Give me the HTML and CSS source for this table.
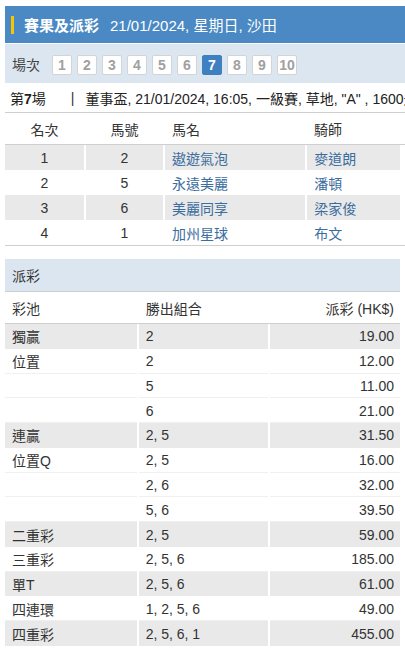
FILE: index.html
```html
<!DOCTYPE html>
<html lang="zh-Hant">
<head>
<meta charset="utf-8">
<title>賽果及派彩</title>
<link rel="stylesheet" href="styles.css">
</head>
<body>
<div class="page">
  <div class="titlebar">
    <span class="flag"></span>
    <span class="title">賽果及派彩</span>
    <span class="date">21/01/2024, 星期日, 沙田</span>
  </div>

  <div class="races">
    <span class="races-label">場次</span>
    <div class="race-list">
      <span class="race">1</span>
      <span class="race">2</span>
      <span class="race">3</span>
      <span class="race">4</span>
      <span class="race">5</span>
      <span class="race">6</span>
      <span class="race active">7</span>
      <span class="race">8</span>
      <span class="race">9</span>
      <span class="race">10</span>
    </div>
  </div>

  <div class="raceinfo">
    <span class="raceno">第<b>7</b>場</span>
    <span class="sep">|</span>
    <span class="raceinfo-text">董事盃, 21/01/2024, 16:05, 一級賽, 草地, "A" , 1600米, 好地</span>
  </div>

  <div class="results">
    <div class="rrow rhead">
      <div class="c center">名次</div>
      <div class="c center">馬號</div>
      <div class="c">馬名</div>
      <div class="c">騎師</div>
    </div>
    <div class="rrow alt">
      <div class="c center">1</div>
      <div class="c center">2</div>
      <div class="c link">遨遊氣泡</div>
      <div class="c link">麥道朗</div>
    </div>
    <div class="rrow">
      <div class="c center">2</div>
      <div class="c center">5</div>
      <div class="c link">永遠美麗</div>
      <div class="c link">潘頓</div>
    </div>
    <div class="rrow alt">
      <div class="c center">3</div>
      <div class="c center">6</div>
      <div class="c link">美麗同享</div>
      <div class="c link">梁家俊</div>
    </div>
    <div class="rrow">
      <div class="c center">4</div>
      <div class="c center">1</div>
      <div class="c link">加州星球</div>
      <div class="c link">布文</div>
    </div>
  </div>

  <div class="payout">
    <div class="payout-title">派彩</div>
    <div class="prow phead">
      <div class="c">彩池</div>
      <div class="c">勝出組合</div>
      <div class="c right">派彩 (HK$)</div>
    </div>
    <div class="prow alt"><div class="c">獨贏</div><div class="c">2</div><div class="c right">19.00</div></div>
    <div class="prow"><div class="c">位置</div><div class="c">2</div><div class="c right">12.00</div></div>
    <div class="prow"><div class="c"></div><div class="c">5</div><div class="c right">11.00</div></div>
    <div class="prow"><div class="c"></div><div class="c">6</div><div class="c right">21.00</div></div>
    <div class="prow alt"><div class="c">連贏</div><div class="c">2, 5</div><div class="c right">31.50</div></div>
    <div class="prow"><div class="c">位置Q</div><div class="c">2, 5</div><div class="c right">16.00</div></div>
    <div class="prow"><div class="c"></div><div class="c">2, 6</div><div class="c right">32.00</div></div>
    <div class="prow"><div class="c"></div><div class="c">5, 6</div><div class="c right">39.50</div></div>
    <div class="prow alt"><div class="c">二重彩</div><div class="c">2, 5</div><div class="c right">59.00</div></div>
    <div class="prow"><div class="c">三重彩</div><div class="c">2, 5, 6</div><div class="c right">185.00</div></div>
    <div class="prow alt"><div class="c">單T</div><div class="c">2, 5, 6</div><div class="c right">61.00</div></div>
    <div class="prow"><div class="c">四連環</div><div class="c">1, 2, 5, 6</div><div class="c right">49.00</div></div>
    <div class="prow alt"><div class="c">四重彩</div><div class="c">2, 5, 6, 1</div><div class="c right">455.00</div></div>
  </div>
</div>
</body>
</html>
```

FILE: styles.css
```css
html, body {
  margin: 0;
  padding: 0;
  overflow: hidden;
}
body {
  background: #fff;
  font-family: "Liberation Sans", Arial, "Noto Sans CJK TC", sans-serif;
  font-size: 14px;
  color: #333;
}
.page {
  padding: 6px 0 0 5px;
  width: 400px;
}

/* title bar */
.titlebar {
  height: 37px;
  background: #4a89c3;
  display: flex;
  align-items: center;
  padding-left: 6px;
  color: #fff;
  font-size: 15px;
}
.flag {
  width: 3px;
  height: 18px;
  background: #f7c600;
  margin-right: 10px;
}
.title {
  font-weight: bold;
}
.date {
  margin-left: 11px;
}

/* race selector */
.races {
  margin-top: 1px;
  height: 39px;
  background: #dce6f1;
  display: flex;
  align-items: center;
  padding-left: 7px;
}
.races-label {
  color: #444;
  margin-right: 12px;
}
.race-list {
  display: flex;
  gap: 5px;
  margin-top: 3px;
}
.race {
  box-sizing: border-box;
  width: 20px;
  height: 20px;
  background: #fff;
  border: 1px solid #d4d4d4;
  border-radius: 2px;
  display: flex;
  align-items: center;
  justify-content: center;
  font-weight: bold;
  font-size: 14px;
  color: #a0a0a0;
}
.race.active {
  background: #3f80c0;
  border-color: #3f80c0;
  color: #fff;
}

/* race info line */
.raceinfo {
  height: 29px;
  display: flex;
  align-items: center;
  padding-left: 5px;
  white-space: nowrap;
  overflow: hidden;
  color: #222;
}
.sep {
  margin-left: 25px;
  margin-right: 11px;
  color: #333;
}

/* results table */
.results {
  border-top: 1px solid #cfcfcf;
  border-bottom: 1px solid #cfcfcf;
}
.rrow {
  width: 395px;
  display: grid;
  grid-template-columns: 20% 20% 36% 24%;
  height: 25px;
  align-items: stretch;
}
.rrow.rhead {
  height: 31px;
  border-bottom: 1px solid #cfcfcf;
  width: 400px;
  grid-template-columns: 79px 79px 142px 100px;
}
.c {
  display: flex;
  align-items: center;
  padding: 0 7px;
  border-left: 2px solid #fff;
  white-space: nowrap;
}
.c:first-child {
  border-left: none;
}
.center {
  justify-content: center;
}
.right {
  justify-content: flex-end;
}
.link {
  color: #3b6d9e;
}
.alt {
  background: #e9e9e9;
}

/* payout */
.payout {
  margin-top: 13px;
  width: 395px;
}
.payout-title {
  height: 32px;
  background: #dce6f1;
  display: flex;
  align-items: center;
  padding-left: 7px;
  border-bottom: 1px solid #cfcfcf;
}
.prow {
  display: grid;
  grid-template-columns: 1fr 1fr 1fr;
  height: 24.77px;
  box-shadow: inset 0 -1px 0 #f0f0f0;
}
.prow.alt {
  box-shadow: none;
}
.prow.phead {
  height: 31px;
  border-bottom: 1px solid #cfcfcf;
  box-shadow: none;
}
.prow .c:last-child {
  padding-right: 6px;
}
```
